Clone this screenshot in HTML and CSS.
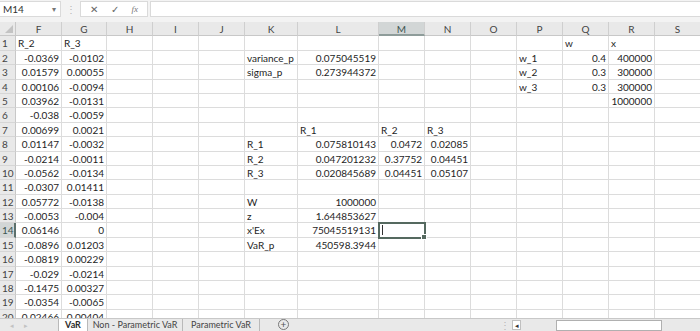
FILE: index.html
```html
<!DOCTYPE html>
<html lang="en">
<head>
    <meta charset="UTF-8">
    <title>VaR - Workbook</title>
    <link rel="stylesheet" href="styles.css">
</head>
<body>

    <!-- Formula Bar -->
    <div class="topbar">
        <div class="namebox"><span>M14</span><span class="caret">▾</span></div>
        <div class="grip">⋮</div>
        <div class="fx-buttons">
            <span class="fx-btn">✕</span>
            <span class="fx-btn">✓</span>
            <span class="fx-btn fx">fx</span>
        </div>
        <div class="formula"></div>
    </div>

    <!-- Sheet Grid -->
    <div class="sheet" id="sheet"></div>

    <!-- Sheet Tabs -->
    <div class="tabbar">
        <div class="tab-nav"><span>◂</span><span>▸</span></div>
        <div class="tab active">VaR</div>
        <div class="tab wide">Non - Parametric VaR</div>
        <div class="tab mid">Parametric VaR</div>
        <div class="tab-add">+</div>
        <div class="tab-space"></div>
        <div class="grip small">⋮</div>
        <div class="scroll-btn">◂</div>
        <div class="scroll-track"><div class="scroll-thumb"></div></div>
    </div>

    <script>
        // Spalten und Zellwerte
        const cols = ['F','G','H','I','J','K','L','M','N','O','P','Q','R','S'];
        const data = {
            1:  { F: 'R_2', G: 'R_3', Q: 'w', R: 'x' },
            2:  { F: '-0.0369', G: '-0.0102', K: 'variance_p', L: '0.075045519', P: 'w_1', Q: '0.4', R: '400000' },
            3:  { F: '0.01579', G: '0.00055', K: 'sigma_p', L: '0.273944372', P: 'w_2', Q: '0.3', R: '300000' },
            4:  { F: '0.00106', G: '-0.0094', P: 'w_3', Q: '0.3', R: '300000' },
            5:  { F: '0.03962', G: '-0.0131', R: '1000000' },
            6:  { F: '-0.038', G: '-0.0059' },
            7:  { F: '0.00699', G: '0.0021', L: 'R_1', M: 'R_2', N: 'R_3' },
            8:  { F: '0.01147', G: '-0.0032', K: 'R_1', L: '0.075810143', M: '0.0472', N: '0.02085' },
            9:  { F: '-0.0214', G: '-0.0011', K: 'R_2', L: '0.047201232', M: '0.37752', N: '0.04451' },
            10: { F: '-0.0562', G: '-0.0134', K: 'R_3', L: '0.020845689', M: '0.04451', N: '0.05107' },
            11: { F: '-0.0307', G: '0.01411' },
            12: { F: '0.05772', G: '-0.0138', K: 'W', L: '1000000' },
            13: { F: '-0.0053', G: '-0.004', K: 'z', L: '1.644853627' },
            14: { F: '0.06146', G: '0', K: "x'Ex", L: '75045519131' },
            15: { F: '-0.0896', G: '0.01203', K: 'VaR_p', L: '450598.3944' },
            16: { F: '-0.0819', G: '0.00229' },
            17: { F: '-0.029', G: '-0.0214' },
            18: { F: '-0.1475', G: '0.00327' },
            19: { F: '-0.0354', G: '-0.0065' },
            20: { F: '0.02466', G: '0.00404' }
        };

        const sheet = document.getElementById('sheet');

        function cell(cls, text) {
            const el = document.createElement('div');
            el.className = cls;
            el.textContent = text || '';
            sheet.appendChild(el);
            return el;
        }

        // Kopfzeile
        cell('corner');
        cols.forEach(c => cell(c === 'M' ? 'col-head active' : 'col-head', c));

        // Zeilen
        for (let r = 1; r <= 20; r++) {
            cell(r === 14 ? 'row-head active' : 'row-head', r);
            cols.forEach(c => {
                const v = (data[r] || {})[c];
                const isNum = v && /^-?[\d.]+$/.test(v);
                const el = cell(isNum ? 'cell num' : 'cell', v);
                if (r === 14 && c === 'M') el.classList.add('selected');
            });
        }
    </script>
</body>
</html>
```

FILE: styles.css
```css
/* Global */
* {
    box-sizing: border-box;
}

body {
    margin: 0;
    width: 700px;
    height: 331px;
    overflow: hidden;
    font-family: 'Lato', 'Noto Sans', sans-serif;
    font-size: 10px;
    color: #1e1e1e;
    background: #fff;
    display: flex;
    flex-direction: column;
}

/* Formula Bar */
.topbar {
    height: 22px;
    flex: none;
    display: flex;
    align-items: flex-start;
    padding-top: 1px;
    background: #f3f3f3;
}

.namebox {
    width: 61px;
    height: 16px;
    background: #fff;
    border: 1px solid #dadada;
    border-left: none;
    display: flex;
    align-items: center;
    justify-content: space-between;
    padding: 0 4px 0 3px;
    color: #333;
}

.caret {
    font-size: 8px;
    color: #777;
}

.grip {
    width: 19px;
    text-align: center;
    color: #b5b5b5;
    font-size: 10px;
    line-height: 16px;
}

.fx-buttons {
    width: 68px;
    height: 16px;
    background: #fff;
    border: 1px solid #dadada;
    display: flex;
    align-items: center;
    justify-content: space-between;
    padding: 0 9px 0 9px;
    color: #666;
}

.fx-btn {
    font-size: 10px;
}

.fx {
    font-family: 'Liberation Serif', serif;
    font-style: italic;
    font-size: 9px;
    color: #777;
}

.formula {
    flex: 1;
    height: 16px;
    margin-left: 2px;
    background: #fff;
    border: 1px solid #dadada;
    border-right: none;
}

/* Sheet */
.sheet {
    height: 296px;
    flex: none;
    overflow: hidden;
    display: grid;
    grid-template-columns: 16px 46px 45px 46px 46px 46px 53px 81px 46px 46px 46px 46px 46px 46px 46px;
    grid-auto-rows: 14.4px;
}

.corner {
    background: #e9e9e9;
    border-right: 1px solid #c8c8c8;
    border-bottom: 1px solid #c8c8c8;
    position: relative;
}

.corner::after {
    content: "";
    position: absolute;
    right: 2px;
    bottom: 2px;
    border-left: 8px solid transparent;
    border-bottom: 8px solid #c3c3c3;
}

.col-head {
    background: #e9e9e9;
    border-right: 1px solid #cfcfcf;
    border-bottom: 1px solid #c8c8c8;
    text-align: center;
    line-height: 14px;
    color: #444;
}

.row-head {
    background: #e9e9e9;
    border-right: 1px solid #c8c8c8;
    border-bottom: 1px solid #d6d6d6;
    padding-left: 2px;
    line-height: 14px;
    color: #444;
}

.col-head.active {
    background: #d2d6d6;
    border-bottom: 2px solid #8e9c9a;
    color: #3d5551;
}

.row-head.active {
    background: #d2d6d6;
    border-right: 2px solid #5d706c;
    color: #3d5551;
}

.cell {
    border-right: 1px solid #dcdcdc;
    border-bottom: 1px solid #dcdcdc;
    padding: 0 2px;
    line-height: 14px;
    white-space: nowrap;
    overflow: hidden;
}

.cell.num {
    text-align: right;
}

/* Aktive Zelle */
.cell.selected {
    position: relative;
    overflow: visible;
    outline: 2px solid #55695f;
    outline-offset: -1px;
}

.cell.selected::before {
    content: "";
    position: absolute;
    left: 3px;
    top: 2px;
    width: 1px;
    height: 10px;
    background: #333;
}

.cell.selected::after {
    content: "";
    position: absolute;
    right: -3px;
    bottom: -3px;
    width: 4px;
    height: 4px;
    background: #55695f;
    border: 1px solid #fff;
}

/* Sheet Tabs */
.tabbar {
    height: 13px;
    flex: none;
    display: flex;
    background: #e9e9e9;
    border-top: 1px solid #c8c8c8;
    font-size: 9px;
    line-height: 12px;
    color: #444;
    white-space: nowrap;
}

.tab-nav {
    width: 58px;
    display: flex;
    gap: 10px;
    padding-left: 10px;
    font-size: 7px;
    color: #c2c2c2;
}

.tab {
    text-align: center;
    border-right: 1px solid #b9b9b9;
    overflow: hidden;
}

.tab.active {
    width: 30px;
    background: #fff;
    font-weight: bold;
    color: #2c2c2c;
    border-left: 1px solid #b9b9b9;
}

.tab.wide {
    width: 95px;
}

.tab.mid {
    width: 77px;
}

.tab-add {
    width: 11px;
    height: 11px;
    margin: 0 0 0 18px;
    border: 1px solid #777;
    border-radius: 50%;
    font-size: 10px;
    line-height: 9px;
    text-align: center;
    color: #555;
}

.tab-space {
    flex: 1;
}

.grip.small {
    width: 10px;
    line-height: 12px;
}

.scroll-btn {
    width: 9px;
    height: 10px;
    margin: 1px 6px 0 2px;
    border: 1px solid #c0c0c0;
    background: #fff;
    font-size: 7px;
    line-height: 8px;
    text-align: center;
    color: #333;
}

.scroll-track {
    width: 173px;
    padding-left: 29px;
}

.scroll-thumb {
    width: 106px;
    height: 11px;
    margin-top: 1px;
    background: #fff;
    border: 1px solid #b0b0b0;
}
```
